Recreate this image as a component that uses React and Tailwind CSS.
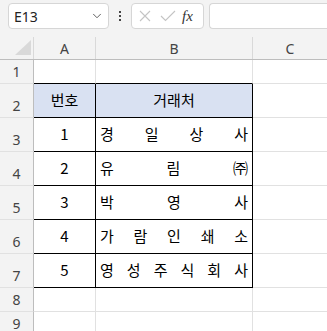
import { ChevronDown } from 'lucide-react';

const kr = { fontFamily: '"Noto Sans CJK KR", "Noto Sans", sans-serif' };

function Spread({ chars }) {
    return (
        <div className="flex h-full items-center justify-between px-[4px] text-[15px] text-black" style={kr}>
            {chars.split('').map((c, i) => (
                <span key={i}>{c}</span>
            ))}
        </div>
    );
}

const rows = [
    { n: 1, h: 'h-[24px]', a: null, b: null, kind: 'empty-top' },
    { n: 2, h: 'h-[34px]', a: '번호', b: '거래처', kind: 'head' },
    { n: 3, h: 'h-[34px]', a: '1', b: '경일상사', kind: 'body' },
    { n: 4, h: 'h-[34px]', a: '2', b: '유림㈜', kind: 'body' },
    { n: 5, h: 'h-[34px]', a: '3', b: '박영사', kind: 'body' },
    { n: 6, h: 'h-[34px]', a: '4', b: '가람인쇄소', kind: 'body' },
    { n: 7, h: 'h-[34px]', a: '5', b: '영성주식회사', kind: 'body' },
    { n: 8, h: 'h-[24px]', a: null, b: null, kind: 'empty' },
    { n: 9, h: 'h-[24px]', a: null, b: null, kind: 'empty' },
];

export default function App() {
    return (
        <div className="w-[327px] h-[331px] overflow-hidden bg-white select-none" style={{ fontFamily: '"Noto Sans", sans-serif' }}>
            {/* Formula bar */}
            <div className="flex h-[37px] items-start bg-[#f3f3f3] pt-[3px] pl-[8px]">
                <div className="flex h-[26px] w-[101px] items-center justify-between rounded-[4px] border border-[#d6d6d6] bg-white pl-[5px] pr-[4px] text-[14px] text-[#222]">
                    <span>E13</span>
                    <ChevronDown size={14} strokeWidth={1.6} className="text-[#555]" />
                </div>
                <div className="flex h-[26px] w-[22px] flex-col items-center justify-center gap-[2px]">
                    <span className="block h-[2px] w-[2px] bg-[#444]" />
                    <span className="block h-[2px] w-[2px] bg-[#444]" />
                    <span className="block h-[2px] w-[2px] bg-[#444]" />
                </div>
                <div className="flex h-[26px] w-[73px] items-center rounded-[4px] border border-[#d6d6d6] bg-white pl-[6px]">
                    <svg width="14" height="14" viewBox="0 0 14 14" className="mr-[8px]">
                        <path d="M2 2 L12 12 M12 2 L2 12" stroke="#c4c4c4" strokeWidth="1.1" fill="none" />
                    </svg>
                    <svg width="16" height="14" viewBox="0 0 16 14" className="mr-[6px]">
                        <path d="M1 7 L5.5 11.5 L15 2" stroke="#c4c4c4" strokeWidth="1.1" fill="none" />
                    </svg>
                    <span className="text-[15px] italic text-[#333]" style={{ fontFamily: '"Liberation Serif", serif' }}>fx</span>
                </div>
                <div className="ml-[5px] h-[26px] flex-1 rounded-l-[4px] border border-r-0 border-[#d6d6d6] bg-white" />
            </div>

            {/* Column headers */}
            <div className="flex h-[23px] border-b border-[#bdbdbd] bg-[#f3f3f3] text-[14px] text-[#444]">
                <div className="relative w-[34px] border-r border-[#d9d9d9]">
                    <svg width="17" height="16" viewBox="0 0 17 16" className="absolute left-[15px] top-[3px]">
                        <path d="M16 0 L16 15 L0 15 Z" fill="#d9d9d9" />
                    </svg>
                </div>
                <div className="flex w-[62px] items-center justify-center border-r border-[#d9d9d9]">A</div>
                <div className="flex w-[157px] items-center justify-center border-r border-[#d9d9d9]">B</div>
                <div className="flex flex-1 items-center justify-center">C</div>
            </div>

            {/* Rows */}
            {rows.map((r) => {
                const inTable = r.kind === 'head' || r.kind === 'body';
                const lastBody = r.n === 7;
                const bottomA = r.kind === 'empty-top' || inTable ? 'border-black' : 'border-[#e1e1e1]';
                return (
                    <div key={r.n} className={`flex ${r.h}`}>
                        <div className="flex w-[34px] items-end justify-center border-r border-b border-r-[#bdbdbd] border-b-[#e1e1e1] bg-[#f3f3f3] pb-[1px] text-[14px] text-[#444]">
                            {r.n}
                        </div>
                        <div
                            className={`flex w-[62px] items-center justify-center border-b ${bottomA} border-r ${inTable ? 'border-r-black' : 'border-r-[#e1e1e1]'} ${r.kind === 'head' ? 'bg-[#d9e1f2]' : ''} text-[15px] text-black`}
                            style={kr}
                        >
                            {r.a}
                        </div>
                        <div
                            className={`w-[157px] border-b ${bottomA} border-r ${inTable ? 'border-r-black' : 'border-r-[#e1e1e1]'} ${r.kind === 'head' ? 'bg-[#d9e1f2]' : ''}`}
                        >
                            {r.kind === 'head' && (
                                <div className="flex h-full items-center justify-center text-[15px] text-black" style={kr}>{r.b}</div>
                            )}
                            {r.kind === 'body' && <Spread chars={r.b} />}
                        </div>
                        <div className="flex-1 border-b border-[#e1e1e1]" />
                        {lastBody && null}
                    </div>
                );
            })}
        </div>
    );
}
